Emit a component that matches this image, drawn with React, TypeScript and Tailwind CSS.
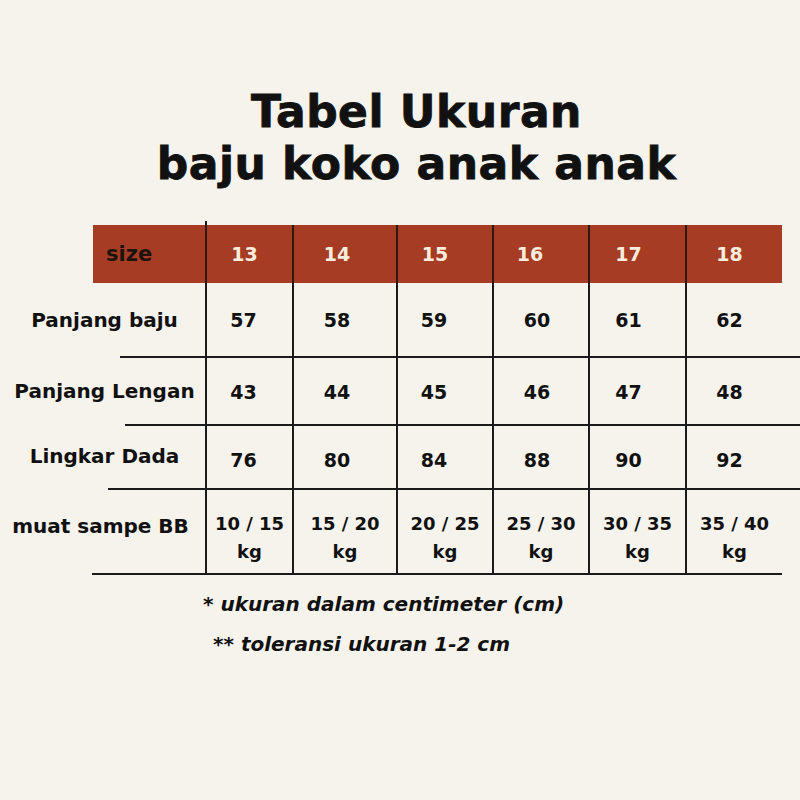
import React from "react";

const widths = ["w-[87px]", "w-[104px]", "w-[96px]", "w-[96px]", "w-[97px]", "w-[97px]"];
// text in the reference sits a little left of each column's centre
const headShift = ["pr-[10px]", "pr-[16px]", "pr-[20px]", "pr-[22px]", "pr-[18px]", "pr-[10px]"];
const bodyShift = ["pr-[12px]", "pr-[16px]", "pr-[22px]", "pr-[8px]", "pr-[18px]", "pr-[10px]"];

const sizes = ["13", "14", "15", "16", "17", "18"];

const rows = [
  { label: "Panjang baju", values: ["57", "58", "59", "60", "61", "62"], h: "h-[75px]", lineStart: "ml-[120px]" },
  { label: "Panjang Lengan", values: ["43", "44", "45", "46", "47", "48"], h: "h-[68px]", lineStart: "ml-[125px]" },
  { label: "Lingkar Dada", values: ["76", "80", "84", "88", "90", "92"], h: "h-[64px]", lineStart: "ml-[108px]", low: true },
];

const weights = ["10 / 15", "15 / 20", "20 / 25", "25 / 30", "30 / 35", "35 / 40"];

export default function App() {
  return (
    <div className="w-[800px] h-[800px] bg-[#f5f3ec] text-[#111] font-['DejaVu_Sans',sans-serif] overflow-hidden">
      {/* Title */}
      <div className="pt-[86px] pl-[33px] text-center text-[44px] leading-[52px] font-bold tracking-[0.5px] [-webkit-text-stroke:0.8px_#111]">
        <div>Tabel Ukuran</div>
        <div>baju koko anak anak</div>
      </div>

      {/* tick above header */}
      <div className="mt-[31px] ml-[205px] w-[2px] h-[4px] bg-[#1a1a1a]" />

      {/* Header */}
      <div className="flex ml-[93px] w-[689px] h-[58px] bg-[#a63c24]">
        <div className="w-[112px] flex items-center pl-[13px] pt-[2px] text-[21px] font-bold text-[#1c130d]">size</div>
        {sizes.map((s, i) => (
          <div
            key={s}
            className={`${widths[i]} ${headShift[i]} border-l-2 border-[#2a1a12] flex items-center justify-center text-[19px] font-bold text-[#f8ecdc]`}
          >
            {s}
          </div>
        ))}
      </div>

      {/* Body rows */}
      {rows.map((r) => (
        <div key={r.label} className={`flex ${r.h}`}>
          <div className="w-[205px] flex flex-col">
            <div className={`flex-1 flex items-center justify-center pl-[4px] text-[20px] font-bold ${r.low ? "pb-[2px]" : ""}`}>
              {r.label}
            </div>
            <div className={`${r.lineStart} h-[2px] bg-[#1a1a1a]`} />
          </div>
          {r.values.map((v, i) => (
            <div
              key={i}
              className={`${widths[i]} ${bodyShift[i]} border-l-2 border-b-2 border-[#1a1a1a] flex items-center justify-center text-[19px] font-bold ${r.low ? "pt-[6px]" : "pt-[2px]"}`}
            >
              {v}
            </div>
          ))}
          <div className="w-[18px] border-b-2 border-[#1a1a1a]" />
        </div>
      ))}

      {/* Weight row */}
      <div className="flex h-[85px]">
        <div className="w-[205px] flex flex-col">
          <div className="flex-1 pt-[22px] pr-[4px] text-center text-[20px] leading-[28px] font-bold">muat sampe BB</div>
          <div className="ml-[92px] h-[2px] bg-[#1a1a1a]" />
        </div>
        {weights.map((w, i) => (
          <div
            key={w}
            className={`${widths[i]} border-l-2 border-b-2 border-[#1a1a1a] pt-[20px] text-center text-[18px] leading-[28px] font-bold`}
          >
            <div>{w}</div>
            <div>kg</div>
          </div>
        ))}
      </div>

      {/* Notes */}
      <div className="mt-[9px] text-[20px] leading-[40px] font-bold italic">
        <div className="pl-[203px]">* ukuran dalam centimeter (cm)</div>
        <div className="pl-[213px]">** toleransi ukuran 1-2 cm</div>
      </div>
    </div>
  );
}
